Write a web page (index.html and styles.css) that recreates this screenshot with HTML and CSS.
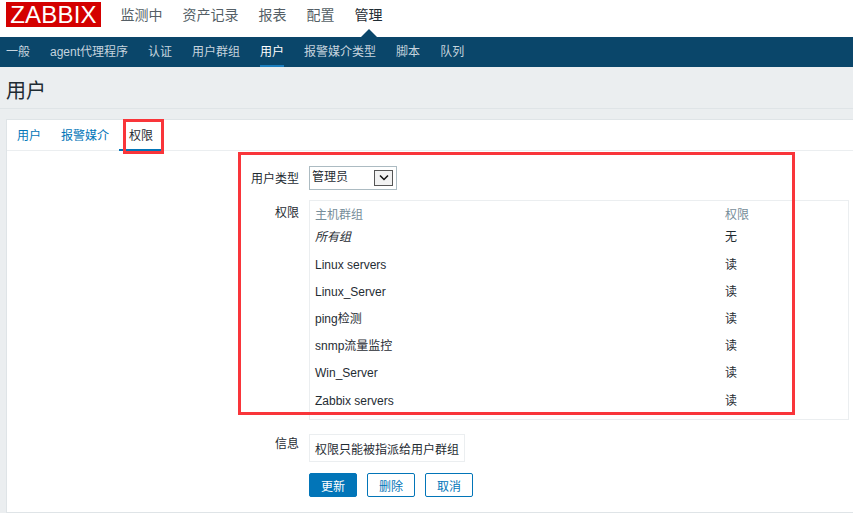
FILE: index.html
```html
<!DOCTYPE html>
<html lang="zh">
<head>
<meta charset="utf-8">
<title>用户</title>
<link rel="stylesheet" href="styles.css">
</head>
<body>
<header class="top">
  <div class="logo">ZABBIX</div>
  <nav class="menu">
    <a>监测中</a><a>资产记录</a><a>报表</a><a>配置</a><a class="on">管理</a>
  </nav>
</header>
<nav class="sub">
  <a>一般</a><a>agent代理程序</a><a>认证</a><a>用户群组</a><a class="on">用户</a><a>报警媒介类型</a><a>脚本</a><a>队列</a>
</nav>
<main class="page">
  <h1 class="title">用户</h1>
  <section class="card">
    <div class="tabs">
      <a>用户</a><a>报警媒介</a><a class="on">权限</a>
      <span class="mark mark-tab"></span>
    </div>
    <div class="form">
      <span class="mark mark-form"></span>
      <label class="lbl lbl-type">用户类型</label>
      <div class="select"><span class="select-text">管理员</span><i class="arrow"><svg width="12" height="8" viewBox="0 0 12 8"><path d="M2 1.5 6 5.5 10 1.5" fill="none" stroke="#111" stroke-width="1.5"/></svg></i></div>
      <label class="lbl lbl-perm">权限</label>
      <div class="box">
        <table class="perm">
          <thead><tr><th>主机群组</th><th>权限</th></tr></thead>
          <tbody>
            <tr class="first"><td><em>所有组</em></td><td>无</td></tr>
            <tr><td>Linux servers</td><td>读</td></tr>
            <tr><td>Linux_Server</td><td>读</td></tr>
            <tr><td>ping检测</td><td>读</td></tr>
            <tr><td>snmp流量监控</td><td>读</td></tr>
            <tr><td>Win_Server</td><td>读</td></tr>
            <tr><td>Zabbix servers</td><td>读</td></tr>
          </tbody>
        </table>
      </div>
      <label class="lbl lbl-info">信息</label>
      <div class="note">权限只能被指派给用户群组</div>
      <div class="btns">
        <button class="btn primary">更新</button><button class="btn">删除</button><button class="btn">取消</button>
      </div>
    </div>
  </section>
</main>
</body>
</html>
```
FILE: styles.css
```css
* { box-sizing: border-box; }
html, body { margin: 0; padding: 0; height: 513px; overflow: hidden; }
body {
  width: 853px;
  background: #ebeef0;
  color: #1f2c33;
  font-family: "Liberation Sans", "Noto Sans CJK SC", sans-serif;
  font-size: 12px;
}
.top { height: 37px; background: #fff; display: flex; padding: 2px 0 0 6px; }
.logo {
  width: 95px; height: 25px; background: #d40000; color: #fff;
  font-size: 24px; line-height: 25px; text-align: center; letter-spacing: 0.2px;
}
.menu { display: flex; gap: 20px; margin-left: 19.5px; font-size: 14px; line-height: 27px; color: #555f66; }
.menu .on { color: #1f2c33; position: relative; height: 35px; }
.menu .on::after {
  content: ""; position: absolute; left: 6px; bottom: 0;
  border-left: 8px solid transparent; border-right: 8px solid transparent;
  border-bottom: 8px solid #0a466a;
  width: 0; height: 0;
}
.sub { height: 30px; background: #0a466a; display: flex; gap: 20px; padding-left: 6px; color: #c6d4de; line-height: 31px; }
.sub .on { color: #fff; height: 30px; border-bottom: 2px solid #1b7dbd; }
.page { padding: 0 0 0 6px; }
.title {
  margin: 0 0 10px -6px; padding: 10px 0 0 6px; height: 42px;
  font-size: 20px; font-weight: 400; line-height: 28px; color: #1f2c33;
  border-bottom: 1px solid #dfe4e7;
}
.card { background: #fff; border: 1px solid #dfe4e7; border-right: 0; height: 394px; }
.tabs {
  position: relative; height: 31px; display: flex; gap: 20px;
  padding: 0 0 0 10px; line-height: 32px; color: #0275b8;
  border-bottom: 1px solid #ebeef0;
}
.tabs .on { color: #1f2c33; position: relative; }
.tabs .on::after {
  content: ""; position: absolute; left: -10px; right: -10px; bottom: -1px; height: 2px; background: #0275b8;
}
.mark { position: absolute; border: 3px solid #f9353a; z-index: 2; pointer-events: none; }
.mark-tab { left: 116px; top: -1px; width: 41px; height: 35px; }
.mark-form { left: 231px; top: 1px; width: 557px; height: 263px; }
.form {
  position: relative;
  display: grid;
  grid-template-columns: 292px 540px;
  grid-template-rows: 24px auto auto auto;
  column-gap: 10px;
  align-items: start;
  padding-top: 15px;
}
.lbl { text-align: right; line-height: 26px; color: #1f2c33; }
.select {
  width: 88px; height: 24px; border: 1px solid #acbbc2;
  display: flex; justify-content: space-between; align-items: center;
  padding: 0 3px 0 2px; font-size: 12px;
}
.select-text { line-height: 20px; margin-top: -2px; }
.arrow {
  width: 19px; height: 16px; border: 1px solid #555; background: #f2f2f2;
  display: flex; align-items: center; justify-content: center;
}
.lbl-perm { grid-column: 1; grid-row: 2; margin-top: 15px; line-height: 16px; }
.box { grid-column: 2; grid-row: 2; border: 1px solid #ebeef0; height: 220px; margin-top: 10px; }
.perm { border-collapse: collapse; width: 100%; table-layout: fixed; }
.perm th, .perm td { padding: 0 0 0 5px; text-align: left; font-weight: 400; line-height: 16px; }
.perm th { height: 24px; color: #768d99; padding-top: 4px; }
.perm th:first-child { width: 410px; }
.perm td { height: 27.2px; }
.perm tr.first td { height: 26px; padding-bottom: 3px; }
.lbl-info { grid-column: 1; grid-row: 3; margin-top: 15px; line-height: 18px; }
.note {
  grid-column: 2; grid-row: 3; justify-self: start;
  margin-top: 14px; height: 28px; padding: 0 5px; line-height: 30px;
  border: 1px solid #ebeef0;
}
.btns { grid-column: 2; grid-row: 4; display: flex; gap: 10px; margin-top: 11px; }
.btn {
  width: 48px; height: 24px; padding: 0; border: 1px solid #0275b8; border-radius: 2px;
  background: #fff; color: #0275b8; font: inherit; font-size: 12px;
}
.btn.primary { background: #0275b8; color: #fff; }
```
